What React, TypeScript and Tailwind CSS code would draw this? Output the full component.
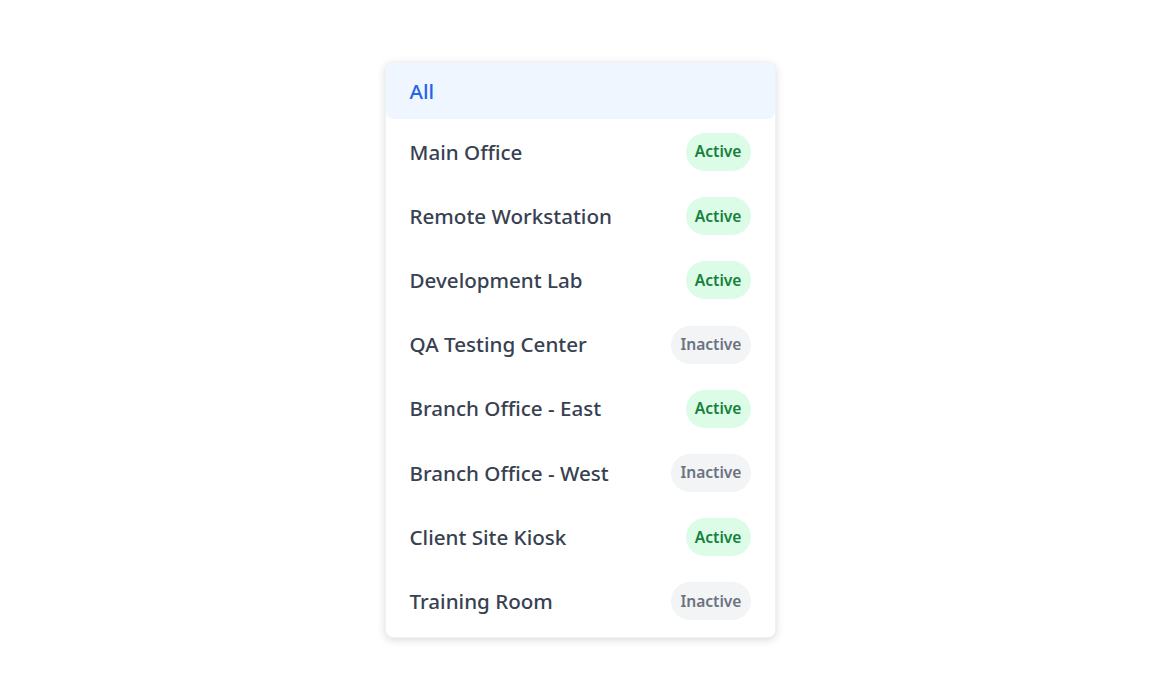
import React from "react";

const items: { name: string; active: boolean }[] = [
  { name: "Main Office", active: true },
  { name: "Remote Workstation", active: true },
  { name: "Development Lab", active: true },
  { name: "QA Testing Center", active: false },
  { name: "Branch Office - East", active: true },
  { name: "Branch Office - West", active: false },
  { name: "Client Site Kiosk", active: true },
  { name: "Training Room", active: false },
];

export default function App() {
  return (
    <div
      className="w-[1160px] h-[700px] bg-white flex justify-center"
      style={{ fontFamily: '"Noto Sans", "Open Sans", sans-serif' }}
    >
      <div className="mt-[62px] w-[391px] h-[576px] bg-white rounded-lg border border-gray-200/60 shadow-[0_2px_8px_rgba(0,0,0,0.15)] flex flex-col">
        <div className="h-[56px] bg-[#eff6ff] rounded-lg flex items-center px-6 text-[20.6px] font-medium text-[#2563eb]">
          All
        </div>
        <div className="flex flex-col pt-[1px]">
          {items.map((it) => (
            <div key={it.name} className="h-[64.2px] flex items-center justify-between px-6">
              <span className="text-[20.6px] font-medium text-[#374151]">{it.name}</span>
              <span
                className={
                  it.active
                    ? "h-[38px] px-[9px] rounded-full flex items-center text-[15.6px] font-semibold bg-[#dcfce7] text-[#15803d]"
                    : "h-[38px] px-[9px] rounded-full flex items-center text-[15.6px] font-semibold bg-[#f3f4f6] text-[#6b7280]"
                }
              >
                {it.active ? "Active" : "Inactive"}
              </span>
            </div>
          ))}
        </div>
      </div>
    </div>
  );
}
